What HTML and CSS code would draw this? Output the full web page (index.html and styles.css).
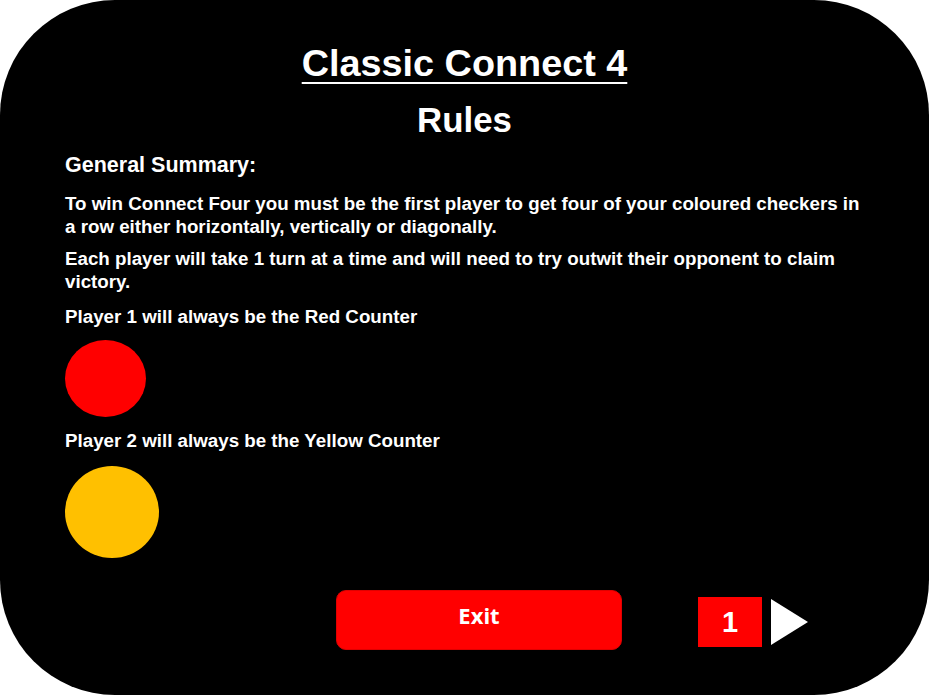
FILE: index.html
```
<!DOCTYPE html>
<html>
<head>
<meta charset="utf-8">
<link rel="stylesheet" href="styles.css">
</head>
<body>
<div class="card">
  <h1 class="title">Classic Connect 4</h1>
  <h2 class="subtitle">Rules</h2>
  <div class="rules">
    <p class="heading">General Summary:</p>
    <p class="para p1">To win Connect Four you must be the first player to get four of your coloured checkers in a row either horizontally, vertically or diagonally.</p>
    <p class="para p2">Each player will take 1 turn at a time and will need to try outwit their opponent to claim victory.</p>
    <p class="para p3">Player 1 will always be the Red Counter</p>
    <div class="counter red"></div>
    <p class="para p4">Player 2 will always be the Yellow Counter</p>
    <div class="counter yellow"></div>
  </div>
  <div class="footer">
    <button class="exit">Exit</button>
    <div class="pager">
      <span class="page-num">1</span>
      <svg class="next" width="38" height="46" viewBox="0 0 38 46"><polygon points="0,0 37,23 0,46" fill="#ffffff"/></svg>
    </div>
  </div>
</div>
</body>
</html>
```
FILE: styles.css
```
html, body {
  margin: 0;
  padding: 0;
  background: #ffffff;
}
.card {
  width: 929px;
  height: 695px;
  background: #000000;
  border-radius: 115px;
  box-sizing: border-box;
  padding-top: 43px;
  color: #ffffff;
  font-family: "Liberation Sans", Arial, sans-serif;
  font-weight: bold;
  display: flex;
  flex-direction: column;
}
.title {
  margin: 0;
  font-size: 37.8px;
  line-height: 40px;
  text-align: center;
  text-decoration: underline;
  text-decoration-thickness: 2px;
  text-underline-offset: 6px;
  font-weight: bold;
}
.subtitle {
  margin: 17px 0 0;
  font-size: 34.8px;
  line-height: 40px;
  text-align: center;
  font-weight: bold;
}
.rules {
  padding-left: 65px;
  width: 805px;
  display: flex;
  flex-direction: column;
  align-items: flex-start;
}
.heading {
  margin: 13px 0 0;
  font-size: 21.5px;
  line-height: 25px;
}
.para {
  margin: 0;
  font-size: 18.75px;
  line-height: 23px;
}
.p1 { margin-top: 14px; }
.p2 { margin-top: 9px; }
.p3 { margin-top: 12px; }
.p4 { margin-top: 12px; }
.counter {
  border-radius: 50%;
}
.red {
  width: 81px;
  height: 77px;
  background: #ff0000;
  margin-top: 12px;
}
.yellow {
  width: 94px;
  height: 92px;
  background: #ffc000;
  margin-top: 14px;
}
.footer {
  display: flex;
  align-items: flex-start;
  padding-left: 336px;
  margin-top: 32px;
}
.exit {
  width: 286px;
  height: 60px;
  background: #ff0000;
  border: 1px solid #e00000;
  border-radius: 10px;
  color: #ffffff;
  font-family: "Open Sans", sans-serif;
  font-weight: bold;
  font-size: 22px;
  line-height: 30px;
  padding: 9px 0 0;
  display: flex;
  justify-content: center;
  align-items: flex-start;
  box-sizing: border-box;
}
.pager {
  display: flex;
  align-items: center;
  margin-left: 76px;
  margin-top: 7px;
  gap: 9px;
}
.page-num {
  width: 64px;
  height: 50px;
  background: #ff0000;
  display: flex;
  align-items: center;
  justify-content: center;
  font-size: 29px;
  line-height: 30px;
}
.next {
  display: block;
}
```
